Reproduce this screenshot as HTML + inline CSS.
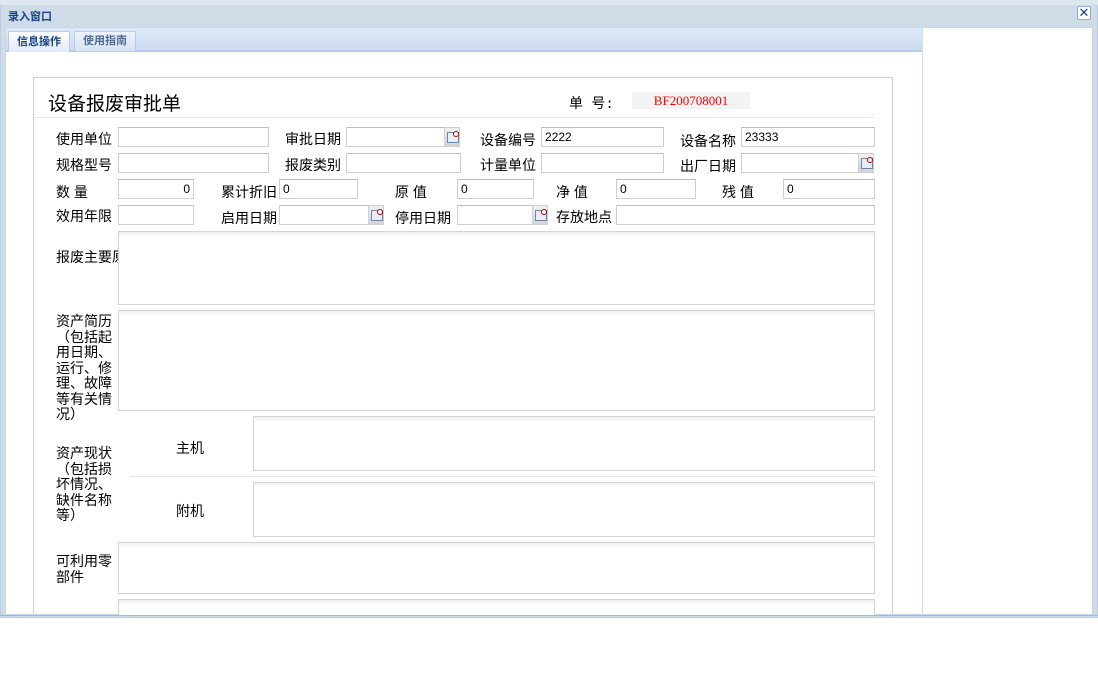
<!DOCTYPE html><html><head><meta charset="utf-8"><style>
*{margin:0;padding:0;box-sizing:border-box}
body{width:1098px;height:687px;background:#fff;position:relative;overflow:hidden;font-family:"Liberation Sans","Noto Sans CJK SC",sans-serif;font-size:14px;color:#000}
.a{position:absolute}
.in{position:absolute;height:20px;border:1px solid #cfcfcf;border-top-color:#bdbdbd;background:#fff;font-size:12px;line-height:18px;padding:0 3px;font-family:"Liberation Sans","Noto Sans CJK SC",sans-serif}
.r{text-align:right}
.btn{position:absolute;width:16px;height:20px;background:linear-gradient(#f0f0f0,#d4d4d4);border:1px solid #cfcfcf}
.btn:after{content:"";position:absolute;left:2px;top:4px;width:10px;height:9px;border:1px solid #6b86a8;background:#e8eef6}
.btn:before{content:"";position:absolute;left:8px;top:3px;width:4px;height:4px;border:1px solid #b00;border-radius:50%;z-index:2;background:#fff}
.lb{position:absolute;font-size:14px;line-height:16px}
.ta{position:absolute;border:1px solid #d4d4d4;background:linear-gradient(#f0f0f0,#fff 5px)}
</style></head><body>
<div class="a" style="left:0;top:0;width:1098px;height:617px;background:#cfdbe7;border:1px solid #b8cce2"></div>
<div class="a" style="left:0;top:0;width:1098px;height:5px;background:#dde7f1"></div>
<div class="a" style="left:8px;top:8px;font-size:11px;font-weight:bold;color:#15428b">录入窗口</div>
<div class="a" style="left:1077px;top:6px;width:14px;height:14px;border:1px solid #8fb0d8;background:#fff;border-radius:2px;color:#15428b;font-size:13px;line-height:12px;text-align:center">✕</div>
<div class="a" style="left:5px;top:27px;width:1088px;height:588px;background:#fff;border:1px solid #c5d6ea"></div>
<div class="a" style="left:922px;top:27px;width:1px;height:588px;background:#d0dff0"></div>
<div class="a" style="left:6px;top:28px;width:916px;height:24px;background:linear-gradient(#dfe8f6,#cddcef);border-bottom:2px solid #b5cbe8"></div>
<div class="a" style="left:8px;top:31px;width:62px;height:21px;background:linear-gradient(#fff,#e1ebf7);border:1px solid #b5cbe8;border-bottom:none;font-size:11px;font-weight:bold;color:#15428b;text-align:center;line-height:20px">信息操作</div>
<div class="a" style="left:74px;top:31px;width:62px;height:20px;background:linear-gradient(#eef3fa,#d6e2f2);border:1px solid #b5cbe8;border-bottom:none;font-size:11px;font-weight:bold;color:#4d6b95;text-align:center;line-height:19px">使用指南</div>
<div class="a" style="left:33px;top:77px;width:860px;height:538px;border:1px solid #d0d0d0;border-bottom:none"></div>
<div class="a" style="left:48px;top:89px;font-size:19px">设备报废审批单</div>
<div class="a" style="left:569px;top:93px;font-size:14px;font-family:'Liberation Mono','Noto Sans CJK SC',monospace">单 号:</div>
<div class="a" style="left:632px;top:92px;width:118px;height:17px;background:#f3f3f3;color:#f00;font-size:13px;text-align:center;line-height:17px;font-family:'Liberation Serif',serif">BF200708001</div>
<div class="a" style="left:34px;top:117px;width:840px;height:1px;background:#dde7f3"></div>

<div class="lb" style="left:56px;top:131px">使用单位</div><div class="in" style="left:118px;top:127px;width:151px"></div>
<div class="lb" style="left:285px;top:131px">审批日期</div><div class="in" style="left:346px;top:127px;width:99px"></div><div class="btn" style="left:444px;top:127px"></div>
<div class="lb" style="left:480px;top:132px">设备编号</div><div class="in" style="left:541px;top:127px;width:123px">2222</div>
<div class="lb" style="left:680px;top:133px">设备名称</div><div class="in" style="left:741px;top:127px;width:134px">23333</div>

<div class="lb" style="left:56px;top:157px">规格型号</div><div class="in" style="left:118px;top:153px;width:151px"></div>
<div class="lb" style="left:285px;top:157px">报废类别</div><div class="in" style="left:346px;top:153px;width:115px"></div>
<div class="lb" style="left:480px;top:157px">计量单位</div><div class="in" style="left:541px;top:153px;width:123px"></div>
<div class="lb" style="left:680px;top:158px">出厂日期</div><div class="in" style="left:741px;top:153px;width:118px"></div><div class="btn" style="left:858px;top:153px"></div>

<div class="lb" style="left:56px;top:184px">数 量</div><div class="in r" style="left:118px;top:179px;width:76px">0</div>
<div class="lb" style="left:221px;top:184px">累计折旧</div><div class="in" style="left:279px;top:179px;width:79px">0</div>
<div class="lb" style="left:395px;top:184px">原 值</div><div class="in" style="left:457px;top:179px;width:77px">0</div>
<div class="lb" style="left:556px;top:184px">净 值</div><div class="in" style="left:616px;top:179px;width:80px">0</div>
<div class="lb" style="left:722px;top:184px">残 值</div><div class="in" style="left:783px;top:179px;width:92px">0</div>

<div class="lb" style="left:56px;top:208px">效用年限</div><div class="in" style="left:118px;top:205px;width:76px"></div>
<div class="lb" style="left:221px;top:210px">启用日期</div><div class="in" style="left:279px;top:205px;width:90px"></div><div class="btn" style="left:368px;top:205px"></div>
<div class="lb" style="left:395px;top:210px">停用日期</div><div class="in" style="left:457px;top:205px;width:76px"></div><div class="btn" style="left:532px;top:205px"></div>
<div class="lb" style="left:556px;top:209px">存放地点</div><div class="in" style="left:616px;top:205px;width:259px"></div>

<div class="lb" style="left:56px;top:249px;width:62px;overflow:hidden;white-space:nowrap">报废主要原因</div>
<div class="ta" style="left:118px;top:231px;width:757px;height:74px"></div>
<div class="lb" style="left:56px;top:314px;width:60px;line-height:15.5px">资产简历（包括起用日期、运行、修理、故障等有关情况）</div>
<div class="ta" style="left:118px;top:310px;width:757px;height:101px"></div>
<div class="lb" style="left:56px;top:446px;width:60px;line-height:15.5px">资产现状（包括损坏情况、缺件名称等）</div>
<div class="lb" style="left:176px;top:440px">主机</div>
<div class="ta" style="left:253px;top:416px;width:622px;height:55px"></div>
<div class="a" style="left:130px;top:476px;width:745px;height:1px;background:#dde7f3"></div>
<div class="lb" style="left:176px;top:503px">附机</div>
<div class="ta" style="left:253px;top:482px;width:622px;height:55px"></div>
<div class="lb" style="left:56px;top:553px;width:60px;line-height:16px">可利用零部件</div>
<div class="ta" style="left:118px;top:542px;width:757px;height:52px"></div>
<div class="ta" style="left:118px;top:599px;width:757px;height:16px;border-bottom:none"></div>
<div class="a" style="left:0;top:615px;width:1098px;height:3px;background:#cfdbe7;border-top:1px solid #99bbe8;border-bottom:1px solid #b8cce2"></div>
</body></html>
